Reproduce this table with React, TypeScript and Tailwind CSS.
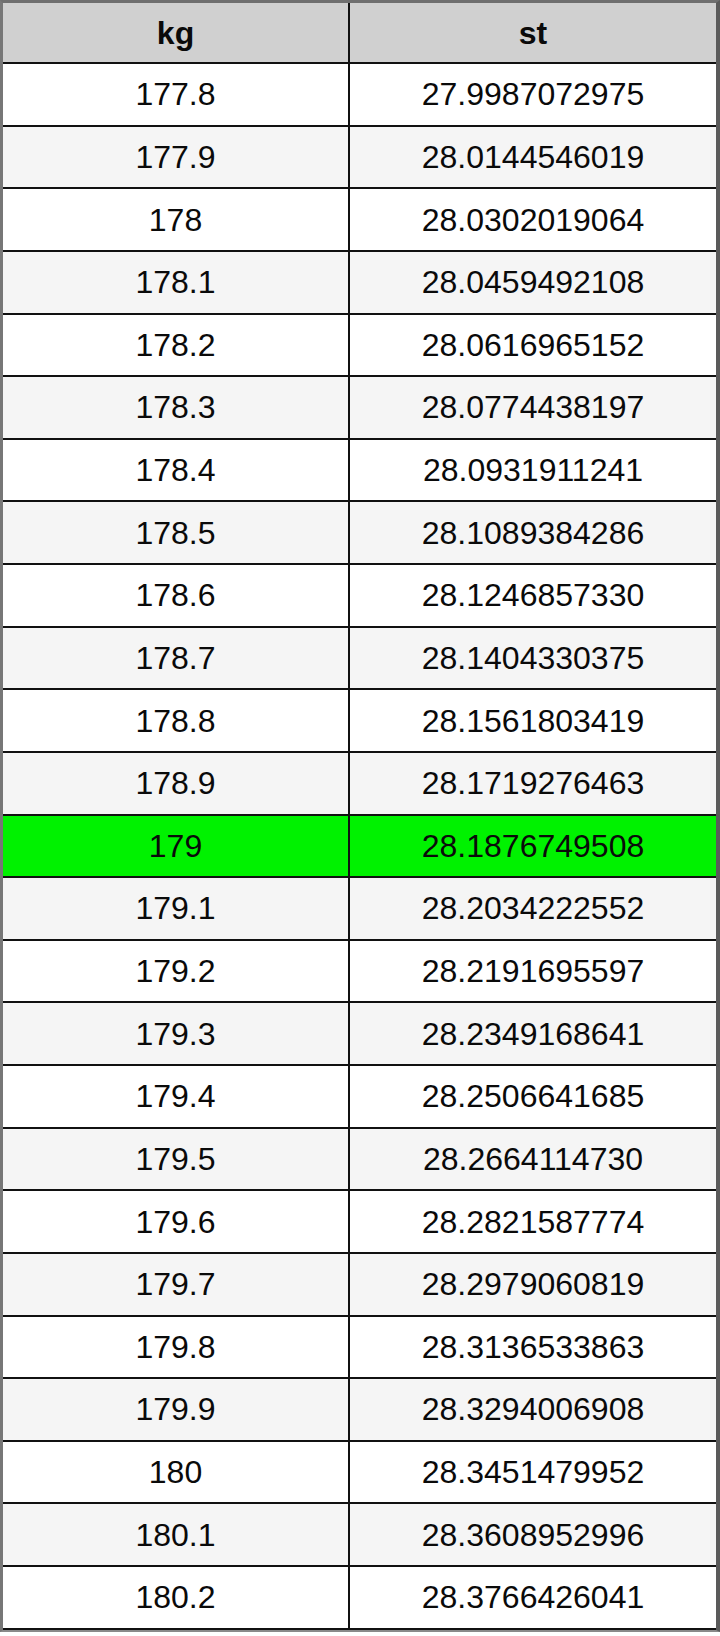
import React from "react";

const rows: [string, string][] = [
  ["177.8", "27.9987072975"],
  ["177.9", "28.0144546019"],
  ["178", "28.0302019064"],
  ["178.1", "28.0459492108"],
  ["178.2", "28.0616965152"],
  ["178.3", "28.0774438197"],
  ["178.4", "28.0931911241"],
  ["178.5", "28.1089384286"],
  ["178.6", "28.1246857330"],
  ["178.7", "28.1404330375"],
  ["178.8", "28.1561803419"],
  ["178.9", "28.1719276463"],
  ["179", "28.1876749508"],
  ["179.1", "28.2034222552"],
  ["179.2", "28.2191695597"],
  ["179.3", "28.2349168641"],
  ["179.4", "28.2506641685"],
  ["179.5", "28.2664114730"],
  ["179.6", "28.2821587774"],
  ["179.7", "28.2979060819"],
  ["179.8", "28.3136533863"],
  ["179.9", "28.3294006908"],
  ["180", "28.3451479952"],
  ["180.1", "28.3608952996"],
  ["180.2", "28.3766426041"],
];

export default function App() {
  return (
    <div
      className="w-[720px] h-[1636px] bg-white"
      style={{ fontFamily: '"Liberation Sans", Arial, sans-serif' }}
    >
      <div className="w-[720px] border-t-[3px] border-l-[3px] border-r-[4px] border-t-[#6f6f6f] border-l-[#777777] border-r-[#5a5a5a] border-b-[2px] border-b-[#8a8a8a]">
        <div className="flex h-[61px] bg-[#d0d0d0] border-b-2 border-[#111111] text-[32px] font-bold text-[#0a0a0a]">
          <div className="w-[347px] flex items-center justify-center border-r-2 border-[#111111]">kg</div>
          <div className="flex-1 flex items-center justify-center">st</div>
        </div>
        {rows.map(([kg, st], i) => {
          const hl = kg === "179";
          const bg = hl ? "bg-[#00f200]" : i % 2 === 1 ? "bg-[#f5f5f5]" : "bg-white";
          return (
            <div
              key={kg}
              className={`flex h-[62.64px] border-b-2 border-[#111111] text-[32px] text-[#0a0a0a] ${bg}`}
            >
              <div className="w-[347px] flex items-center justify-center border-r-2 border-[#111111]">{kg}</div>
              <div className="flex-1 flex items-center justify-center">{st}</div>
            </div>
          );
        })}
      </div>
    </div>
  );
}
